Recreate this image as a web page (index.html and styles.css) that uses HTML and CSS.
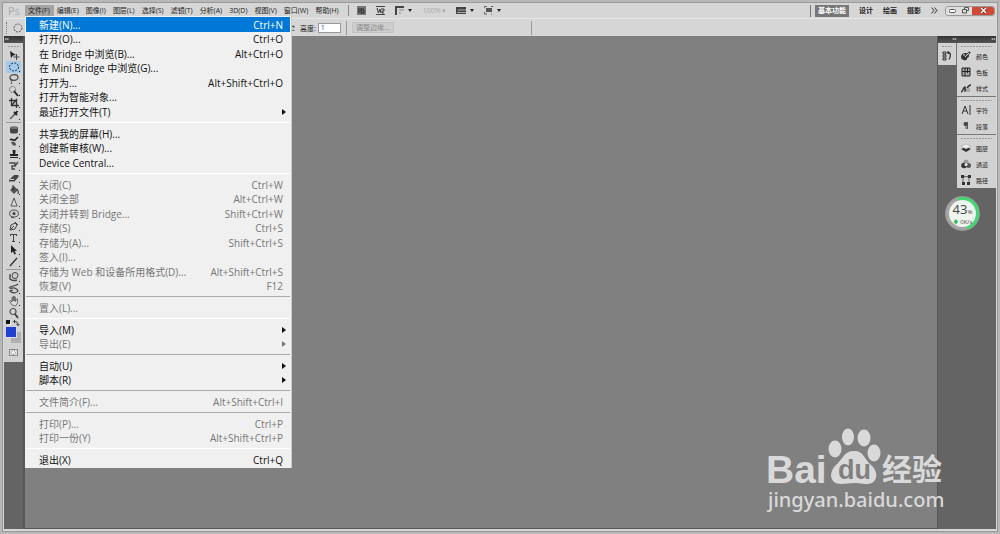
FILE: index.html
```html
<!DOCTYPE html>
<html lang="zh-CN">
<head>
<meta charset="utf-8">
<meta name="viewport" content="width=device-width, initial-scale=1">
<title>Photoshop</title>
<link rel="stylesheet" href="styles.css">
</head>
<body>
<div class="window">
  <header class="menubar">
    <span class="logo">Ps</span>
    <nav class="menus">
      <button class="menu-btn open">文件(F)</button>
      <button class="menu-btn">编辑(E)</button>
      <button class="menu-btn">图像(I)</button>
      <button class="menu-btn">图层(L)</button>
      <button class="menu-btn">选择(S)</button>
      <button class="menu-btn">滤镜(T)</button>
      <button class="menu-btn">分析(A)</button>
      <button class="menu-btn">3D(D)</button>
      <button class="menu-btn">视图(V)</button>
      <button class="menu-btn">窗口(W)</button>
      <button class="menu-btn">帮助(H)</button>
    </nav>
    <div class="view-tools">
      <button class="view-btn" aria-label="Bridge"><svg width="9" height="9" viewBox="0 0 9 9"><path d="M0 0h9v9H0z" fill="#777"/><path d="M2 2v5M4 2v5M4 4h3v3H4M6 2v1" stroke="#222" fill="none"/></svg></button>
      <button class="view-btn" aria-label="Mini Bridge"><svg width="9" height="9" viewBox="0 0 9 9"><path d="M0 .5h9M0 8.500h9" stroke="#444"/><path d="M1 2l1.500 5L4 3l1 4M5 3h3v2H6v2h2" stroke="#333" fill="none"/></svg></button>
      <button class="view-btn" aria-label="查看额外内容"><svg width="18" height="9" viewBox="0 0 18 9"><path d="M0 1h9M1 0v9" stroke="#444" stroke-width="2"/><path d="M4 4h5M4 7h2" stroke="#888"/><path d="M13 3h4l-2 3z" fill="#222"/></svg></button>
      <button class="view-btn zoom" disabled>100% ▾</button>
      <button class="view-btn" aria-label="排列文档"><svg width="18" height="9" viewBox="0 0 18 9"><path d="M0 1h10v7H0z" fill="#444"/><path d="M2 4h8M1 6.500h9" stroke="#aaa"/><path d="M14 3h4l-2 3z" fill="#222"/></svg></button>
      <button class="view-btn" aria-label="屏幕模式"><svg width="18" height="9" viewBox="0 0 18 9"><path d="M2 2h6v4H2z" fill="#555"/><path d="M.5 2V.5H3M7 .5h2.500M.5 6v2H3M7 8h1" stroke="#666" fill="none"/><path d="M13 3h4l-2 3z" fill="#222"/></svg></button>
    </div>
    <div class="workspaces">
      <button class="space active">基本功能</button>
      <button class="space">设计</button>
      <button class="space">绘画</button>
      <button class="space">摄影</button>
      <button class="more" aria-label="更多"><svg width="7" height="7" viewBox="0 0 7 7"><path d="M.5.5l2.500 3-2.500 3M3.500.5l2.500 3-2.500 3" fill="none" stroke="#333"/></svg></button>
    </div>
    <div class="controls">
      <button class="control" aria-label="最小化"><svg width="7" height="7" viewBox="0 0 7 7"><rect x=".5" y="2.500" width="6" height="3" rx="1" fill="#fff" stroke="#555"/></svg></button>
      <button class="control" aria-label="还原"><svg width="7" height="7" viewBox="0 0 7 7"><path d="M2.500 2V.5h4v3H5M.5 2.500h4v3.500h-4z" fill="none" stroke="#555"/></svg></button>
      <button class="control close" aria-label="关闭"><svg width="7" height="7" viewBox="0 0 7 7"><path d="M1 1l5 5M6 1L1 6" stroke="#7a2b20" stroke-width="3"/><path d="M1 1l5 5M6 1L1 6" stroke="#fff" stroke-width="1.500"/></svg></button>
    </div>
  </header>

  <div class="options">
    <span class="grip-v"></span>
    <svg width="10" height="10" viewBox="0 0 10 10"><circle cx="5" cy="5" r="4" fill="none" stroke="#555" stroke-dasharray="2 1"/></svg>
    <span class="divider push"></span>
    <span class="swap">⇄</span>
    <label class="field">高度: <input type="text" value="1"></label>
    <span class="divider"></span>
    <button class="refine" disabled>调整边缘...</button>
    <span class="divider end"></span>
  </div>

  <main class="workspace">
    <aside class="toolbox">
      <div class="dock-head"><span>▸▸</span></div>
      <div class="tools">
        <div class="grip"></div>
        <button class="tool" aria-label="移动"><svg viewBox="0 0 12 12"><path d="M2 2l6 4-3 .5L3 9z" fill="#222"/><path d="M8.500 5v6M5.500 8h6" stroke="#444"/></svg></button>
        <button class="tool on more-tools" aria-label="椭圆选框"><svg viewBox="0 0 12 12"><ellipse cx="6" cy="6" rx="4.500" ry="4" fill="none" stroke="#234" stroke-dasharray="2 1.300"/></svg></button>
        <button class="tool more-tools" aria-label="套索"><svg viewBox="0 0 12 12"><ellipse cx="6" cy="4.500" rx="4" ry="2.800" fill="none" stroke="#444" stroke-width="1.200"/><path d="M3 6c-1 2 2 2 0 5" fill="none" stroke="#444"/></svg></button>
        <button class="tool more-tools" aria-label="快速选择"><svg viewBox="0 0 12 12"><circle cx="4.500" cy="4.500" r="3" fill="none" stroke="#555" stroke-dasharray="1.500 1"/><path d="M6 6l4 5" stroke="#222" stroke-width="1.800"/></svg></button>
        <button class="tool more-tools" aria-label="裁剪"><svg viewBox="0 0 12 12"><path d="M3.500 1v7.500H11M1 3.500h7.500V11M4 8l5-6" fill="none" stroke="#333" stroke-width="1.300"/></svg></button>
        <button class="tool more-tools" aria-label="吸管"><svg viewBox="0 0 12 12"><path d="M2 10l5-5" stroke="#555" stroke-width="1.500"/><path d="M6 3l3 3M7.500 4.500l2-2.500" stroke="#222" stroke-width="2"/></svg></button>
        <hr class="tool-line">
        <button class="tool more-tools" aria-label="修复画笔"><svg viewBox="0 0 12 12"><rect x="2" y="2.500" width="8" height="7" rx="2" fill="#444"/><path d="M3 4h6" stroke="#999"/></svg></button>
        <button class="tool more-tools" aria-label="画笔"><svg viewBox="0 0 12 12"><path d="M2 4c2-2 3 1 5 0l3-3" fill="none" stroke="#222" stroke-width="1.600"/><path d="M3 6c3-1 5 0 5 3-2 2-4 0-5-3z" fill="#555"/></svg></button>
        <button class="tool more-tools" aria-label="仿制图章"><svg viewBox="0 0 12 12"><path d="M4.500 2h3v2l-.5 2h3v2H2V6h3zM2 9h8v1H2z" fill="#222"/></svg></button>
        <button class="tool more-tools" aria-label="历史记录画笔"><svg viewBox="0 0 12 12"><path d="M3 3h4v3H4v3h3M2 2v2M10 2L7 6" fill="none" stroke="#444" stroke-width="1.300"/></svg></button>
        <button class="tool more-tools" aria-label="橡皮擦"><svg viewBox="0 0 12 12"><path d="M1 8l5-5h4.500v2L6.500 9.500H1z" fill="#444"/><path d="M2 7.500h4" stroke="#ccc"/></svg></button>
        <button class="tool more-tools" aria-label="油漆桶"><svg viewBox="0 0 12 12"><path d="M2 6l4-4 4 4-4 4z" fill="#555"/><path d="M5 1v5M9 5c2 2 1 4 1 5" stroke="#222" fill="none"/></svg></button>
        <button class="tool more-tools" aria-label="模糊"><svg viewBox="0 0 12 12"><path d="M6 2l3 8H3z" fill="#ddd" stroke="#555"/></svg></button>
        <button class="tool more-tools" aria-label="减淡"><svg viewBox="0 0 12 12"><ellipse cx="6" cy="5.500" rx="4.500" ry="3.500" fill="#ccc" stroke="#555"/><circle cx="6" cy="5.500" r="1.500" fill="#444"/><path d="M3 9l3 1" stroke="#444"/></svg></button>
        <button class="tool more-tools" aria-label="钢笔"><svg viewBox="0 0 12 12"><path d="M2 10l1-5 4-2 2 2-2 4zM7 2l3 3M2 10l4-4" fill="none" stroke="#444"/></svg></button>
        <button class="tool more-tools" aria-label="文字"><svg viewBox="0 0 12 12"><path d="M2 2.500h7M2.500 2v2M8.500 2v2M5.500 2v8M4 9.500h3" stroke="#444" fill="none"/></svg></button>
        <button class="tool more-tools" aria-label="路径选择"><svg viewBox="0 0 12 12"><path d="M3 1v8l2-1.500 1.500 3 1.500-.8L6.500 7H9z" fill="#222"/></svg></button>
        <button class="tool more-tools" aria-label="直线"><svg viewBox="0 0 12 12"><path d="M2 10l7-8" stroke="#333" stroke-width="1.300"/></svg></button>
        <hr class="tool-line">
        <button class="tool more-tools" aria-label="3D 旋转"><svg viewBox="0 0 12 12"><circle cx="7" cy="4.500" r="3" fill="#ccc" stroke="#444"/><path d="M2 3v5c2 2 4 2 7 1" fill="none" stroke="#444" stroke-width="1.400"/></svg></button>
        <button class="tool more-tools" aria-label="3D 相机"><svg viewBox="0 0 12 12"><path d="M1 5c2-3 6-1 9-4M2 6c3-2 7-1 8 2-2 3-6 2-8 0l3-1" fill="none" stroke="#444" stroke-width="1.200"/></svg></button>
        <button class="tool more-tools" aria-label="抓手"><svg viewBox="0 0 12 12"><path d="M4 10L1.500 6l1-.5L4 7V2.500h1V6 1.500h1.200V6 2h1.200v4.500L8.500 4h1v4l-2 3z" fill="#ddd" stroke="#555" stroke-width=".8"/></svg></button>
        <button class="tool" aria-label="缩放"><svg viewBox="0 0 12 12"><circle cx="5" cy="4.500" r="3" fill="none" stroke="#555" stroke-width="1.200"/><path d="M7 7l3 4" stroke="#333" stroke-width="1.600"/></svg></button>
        <svg class="swatches" width="18" height="28" viewBox="0 0 18 28"><path d="M4 3h3v3H4z" fill="#eee"/><path d="M2 1h4v4H2z" fill="#111"/><path d="M10 2.500c3 0 4 1 4 4M11 1L9.500 2.500 11 4M12.500 5l1.500 1.500L15.500 5" fill="none" stroke="#333"/><path d="M7 13h10v11H7z" fill="#b0b0b0"/><path d="M2 8h11v11H2z" fill="#ddd"/><path d="M2 8h10v10H2z" fill="#2142d0"/></svg>
        <button class="tool" aria-label="快速蒙版"><svg viewBox="0 0 12 12"><rect x="1.500" y="2.500" width="8" height="6" fill="#ddd" stroke="#888"/><circle cx="5.500" cy="5.500" r="1.800" fill="#fff" stroke="#777" stroke-dasharray="1 1"/></svg></button>
      </div>
    </aside>

    <section class="canvas" aria-label="文档区"></section>

    <aside class="dock narrow">
      <div class="dock-head"><span>◂◂</span></div>
      <div class="panel-group">
        <div class="grip"></div>
        <button class="panel" aria-label="历史记录"><svg width="10" height="10" viewBox="0 0 10 10"><path d="M1 1h3v2H1zM1 4h3v2H1zM1 7h3v2H1z" fill="none" stroke="#333"/><path d="M6 1.500c3 0 3 4 1 7M6 0v3" fill="none" stroke="#333" stroke-width="1.300"/></svg></button>
      </div>
    </aside>
    <aside class="dock wide">
      <div class="dock-head"><span>◂◂</span></div>
      <div class="panel-group">
        <div class="grip"></div>
        <button class="panel"><svg width="10" height="10" viewBox="0 0 10 10"><path d="M0 6c0-5 8-5 8-1 0 2-2 1-2 3s-6 2-6-2z" fill="#333"/><path d="M4 6l5-5" stroke="#333" stroke-width="2"/><path d="M4 6l4-4M2 4h2" stroke="#ddd"/></svg>颜色</button>
        <button class="panel"><svg width="10" height="10" viewBox="0 0 10 10"><path d="M1 1h8v8H1zM1 4.500h8M4 1v8M6.500 1v5" fill="#aaa" stroke="#222"/></svg>色板</button>
        <button class="panel"><svg width="10" height="10" viewBox="0 0 10 10"><path d="M0 9c2 0 2-5 4-5v4c2 0 2-6 6-6" fill="none" stroke="#333" stroke-width="1.500"/><path d="M5 5h4v4H5z" fill="#aaa"/></svg>样式</button>
      </div>
      <div class="panel-group">
        <div class="grip"></div>
        <button class="panel"><svg width="10" height="10" viewBox="0 0 10 10"><path d="M1 9l3-8 3 8M2 6h4M9 0v10" fill="none" stroke="#333"/></svg>字符</button>
        <button class="panel"><svg width="10" height="10" viewBox="0 0 10 10"><path d="M6.500 1v7M5 1v7" fill="none" stroke="#555"/><circle cx="4.500" cy="3" r="2" fill="#444"/></svg>段落</button>
      </div>
      <div class="panel-group">
        <div class="grip"></div>
        <button class="panel"><svg width="10" height="10" viewBox="0 0 10 10"><path d="M0 6l5-2 5 2-5 3z" fill="#333"/><path d="M0 3l5-2 5 2-5 3z" fill="#eee" stroke="#999" stroke-width=".5"/></svg>图层</button>
        <button class="panel"><svg width="10" height="10" viewBox="0 0 10 10"><circle cx="5" cy="3" r="2.500" fill="#999"/><circle cx="3" cy="6.500" r="2.800" fill="#333"/><circle cx="7.500" cy="6.500" r="2.500" fill="#555"/><circle cx="5" cy="5.500" r="1.500" fill="#eee"/></svg>通道</button>
        <button class="panel"><svg width="10" height="10" viewBox="0 0 10 10"><path d="M2 8V3c2-2 4-2 6 0v5M1 1.500h8" fill="none" stroke="#666"/><path d="M0 0h3v3H0zM7 0h3v3H7zM1 7h3v3H1zM6 7h3v3H6z" fill="#333"/></svg>路径</button>
      </div>
    </aside>
  </main>
</div>

<div class="file-menu" role="menu">
  <div class="group">
    <button class="item hover" role="menuitem">新建(N)...<kbd>Ctrl+N</kbd></button>
    <button class="item" role="menuitem">打开(O)...<kbd>Ctrl+O</kbd></button>
    <button class="item" role="menuitem">在 Bridge 中浏览(B)...<kbd>Alt+Ctrl+O</kbd></button>
    <button class="item" role="menuitem">在 Mini Bridge 中浏览(G)...</button>
    <button class="item" role="menuitem">打开为...<kbd>Alt+Shift+Ctrl+O</kbd></button>
    <button class="item" role="menuitem">打开为智能对象...</button>
    <button class="item sub" role="menuitem">最近打开文件(T)</button>
  </div>
  <hr class="sep light">
  <div class="group">
    <button class="item" role="menuitem">共享我的屏幕(H)...</button>
    <button class="item" role="menuitem">创建新审核(W)...</button>
    <button class="item" role="menuitem">Device Central...</button>
  </div>
  <hr class="sep light">
  <div class="group">
    <button class="item" role="menuitem" disabled>关闭(C)<kbd>Ctrl+W</kbd></button>
    <button class="item" role="menuitem" disabled>关闭全部<kbd>Alt+Ctrl+W</kbd></button>
    <button class="item" role="menuitem" disabled>关闭并转到 Bridge...<kbd>Shift+Ctrl+W</kbd></button>
    <button class="item" role="menuitem" disabled>存储(S)<kbd>Ctrl+S</kbd></button>
    <button class="item" role="menuitem" disabled>存储为(A)...<kbd>Shift+Ctrl+S</kbd></button>
    <button class="item" role="menuitem" disabled>签入(I)...</button>
    <button class="item" role="menuitem" disabled>存储为 Web 和设备所用格式(D)...<kbd>Alt+Shift+Ctrl+S</kbd></button>
    <button class="item" role="menuitem" disabled>恢复(V)<kbd>F12</kbd></button>
  </div>
  <hr class="sep">
  <div class="group">
    <button class="item" role="menuitem" disabled>置入(L)...</button>
  </div>
  <hr class="sep light">
  <div class="group">
    <button class="item sub" role="menuitem">导入(M)</button>
    <button class="item sub" role="menuitem" disabled>导出(E)</button>
  </div>
  <hr class="sep">
  <div class="group">
    <button class="item sub" role="menuitem">自动(U)</button>
    <button class="item sub" role="menuitem">脚本(R)</button>
  </div>
  <hr class="sep">
  <div class="group">
    <button class="item" role="menuitem" disabled>文件简介(F)...<kbd>Alt+Shift+Ctrl+I</kbd></button>
  </div>
  <hr class="sep">
  <div class="group">
    <button class="item" role="menuitem" disabled>打印(P)...<kbd>Ctrl+P</kbd></button>
    <button class="item" role="menuitem" disabled>打印一份(Y)<kbd>Alt+Shift+Ctrl+P</kbd></button>
  </div>
  <hr class="sep light">
  <div class="group">
    <button class="item" role="menuitem">退出(X)<kbd>Ctrl+Q</kbd></button>
  </div>
</div>

<div class="meter">
  <div class="meter-face">
    <div class="meter-value">43<small>%</small></div>
    <div class="meter-rate"><span>♦</span> 0K/s</div>
  </div>
</div>

<svg class="watermark" width="184" height="90" viewBox="0 0 184 90">
  <text class="wm-latin" x="0" y="55">Bai</text>
  <ellipse cx="69" cy="21" rx="6.500" ry="8.500"/>
  <ellipse cx="82" cy="9" rx="6" ry="8.500"/>
  <ellipse cx="98" cy="10" rx="6.500" ry="8.500"/>
  <ellipse cx="108" cy="25" rx="6.500" ry="8.500"/>
  <path d="M88 23c10 0 10 8 17 14 9 8 6 19-4 19-6 0-8-1-13-1s-8 1-13 1c-11 0-13-11-5-19 7-6 8-14 18-14z"/>
  <text class="wm-du" x="72" y="51">du</text>
  <text class="wm-cjk" x="116" y="52">经验</text>
  <text class="wm-url" x="2" y="79">jingyan.baidu.com</text>
</svg>
</body>
</html>
```
FILE: styles.css
```css
* { box-sizing: border-box; }

body {
  margin: 0;
  height: 100vh;
  overflow: hidden;
  position: relative;
  background: #b8b8b8;
  font-family: "Open Sans", "Noto Sans CJK SC", sans-serif;
  font-size: 7px;
  color: #222;
}

button {
  margin: 0;
  padding: 0;
  border: 0;
  background: none;
  font: inherit;
  color: inherit;
  white-space: nowrap;
}

svg { display: block; flex: none; }
hr { margin: 0; border: 0; }

.window {
  height: 100vh;
  display: flex;
  flex-direction: column;
  border: solid #b8b8b8;
  border-width: 2px 2px 3px;
  outline: 1px solid #999;
  outline-offset: -3px;
  background: #d6d6d6;
  padding: 1px 2px 2px;
}

/* Menu bar */
.menubar {
  display: flex;
  align-items: center;
  height: 16px;
  flex: none;
  border-bottom: 1px solid #e6e6e6;
}
.logo { width: 21px; padding-left: 4px; font-size: 11px; color: #aaa; }
.menus { display: flex; padding-right: 5px; border-right: 1px solid #888; }
.menu-btn { height: 11px; line-height: 11px; padding: 0 4px 0 3px; }
.menu-btn.open { background: #a4a4a4; }
.view-tools { display: flex; align-items: center; gap: 10px; margin-left: 8px; }
.zoom { color: #aaa; }
.workspaces { display: flex; align-items: center; gap: 10px; margin-left: auto; padding-left: 4px; border-left: 1px solid #777; }
.space { height: 12px; line-height: 12px; font-weight: 700; }
.space.active { background: #777; color: #fff; padding: 0 3px; }
.controls { display: flex; height: 10px; margin: 0 1px 0 7px; border: 1px solid #999; border-radius: 3px; overflow: hidden; }
.control { width: 13px; display: grid; place-items: center; background: #ddd; }
.control.close { width: 22px; background: #d04a36; }

/* Options bar */
.options {
  display: flex;
  align-items: center;
  gap: 5px;
  height: 17px;
  flex: none;
  padding-left: 2px;
}
.grip-v { width: 2px; height: 12px; border-left: 1px dotted #777; }
.divider { width: 1px; height: 14px; background: #999; }
.divider.push { margin-left: 254px; }
.divider.end { margin-left: 132px; }
.field { display: flex; align-items: center; gap: 2px; }
.field input { width: 23px; height: 10px; border: 1px solid #999; padding: 0 2px; font: inherit; background: #fff; color: #24c; }
.refine { width: 42px; height: 11px; line-height: 9px; border: 1px solid #c2c2c2; background: #cdcdcd; color: #888; }

/* Workspace */
.workspace { flex: 1; min-height: 0; display: flex; background: #646464; }
.canvas { flex: 1; background: #808080; border: solid #575757; border-width: 0 1px 1px 2px; }
.dock-head {
  height: 7px;
  line-height: 6px;
  background: linear-gradient(#333, #555);
  color: #ccc;
  font-size: 4px;
  padding: 0 1px;
}
.dock .dock-head { text-align: right; }
.grip { height: 5px; margin: 0 4px; background: repeating-linear-gradient(90deg, #999 0 2px, transparent 2px 3px) 0 3px / 100% 1px no-repeat; }

.toolbox { width: 19px; flex: none; }
.tools { display: flex; flex-direction: column; background: #d2d2d2; padding-bottom: 3px; }
.tools .grip { height: 6px; }
.tool { position: relative; height: 12px; margin: 0 2px; display: grid; place-items: center; }
.tool svg { width: 12px; height: 12px; }
.tool.on { background: #a5c9e8; }
.more-tools::after {
  content: "";
  position: absolute;
  right: 1px;
  bottom: 1px;
  width: 1px;
  height: 1px;
  background: #222;
}
.tool-line { height: 1px; margin: 1px 2px; background: #999; }

.dock { flex: none; }
.dock.narrow { width: 19px; }
.dock.narrow .panel-group { border-right: 1px solid #777; padding-bottom: 1px; }
.dock.wide { width: 39px; }
.panel-group { background: #d2d2d2; }
.panel-group + .panel-group { border-top: 1px solid #777; }
.panel { height: 16px; width: 100%; display: flex; align-items: center; gap: 5px; padding-left: 4px; font-size: 6px; }

/* File menu */
.file-menu {
  position: absolute;
  left: 25px;
  top: 16px;
  width: 267px;
  padding: 1px;
  background: #f0f0f0;
  border-right: 1px solid #ccc;
  font-size: 10px;
}
.group { display: grid; grid-auto-rows: 15px 14px; }
.item { display: flex; align-items: center; justify-content: space-between; padding: 0 7px 0 13px; line-height: 14px; color: #111; }
.item kbd { font: inherit; }
.item:disabled { color: #777; }
.item.hover { background: #0078d7; color: #fff; }
.item.sub { padding-right: 4px; }
.item.sub::after { content: ""; border: solid transparent; border-width: 3px 0 3px 4px; border-left-color: currentColor; }
.sep { height: 7px; background: linear-gradient(#aaa, #aaa) 0 3px / 100% 1px no-repeat; }
.sep.light { background-image: linear-gradient(#fff, #fff); }

/* Floating meter */
.meter {
  position: absolute;
  right: 20px;
  top: 196px;
  width: 35px;
  height: 35px;
  padding: 3px;
  border: 1px solid #999;
  border-radius: 50%;
  background: conic-gradient(#3fd873 0 45%, #a5a5a5 45% 95%, #3fd873 95%);
}
.meter-face { height: 100%; border-radius: 50%; background: #eef4ee; text-align: center; padding-top: 3px; }
.meter-value { font-size: 13px; line-height: 13px; color: #444; }
.meter-value small { font-size: 6px; }
.meter-rate { font-size: 6px; line-height: 7px; color: #444; }
.meter-rate span { color: #2b5; }

/* Watermark */
.watermark { position: absolute; right: 50px; bottom: 16px; fill: #d9d9d9; }
.wm-latin { font: 700 39px "Liberation Sans", sans-serif; }
.wm-du { font: 700 27px "Liberation Sans", sans-serif; fill: #808080; }
.wm-cjk { font: 700 30px "Noto Sans CJK SC", sans-serif; }
.wm-url { font: 500 20px "Noto Sans", sans-serif; }
```
